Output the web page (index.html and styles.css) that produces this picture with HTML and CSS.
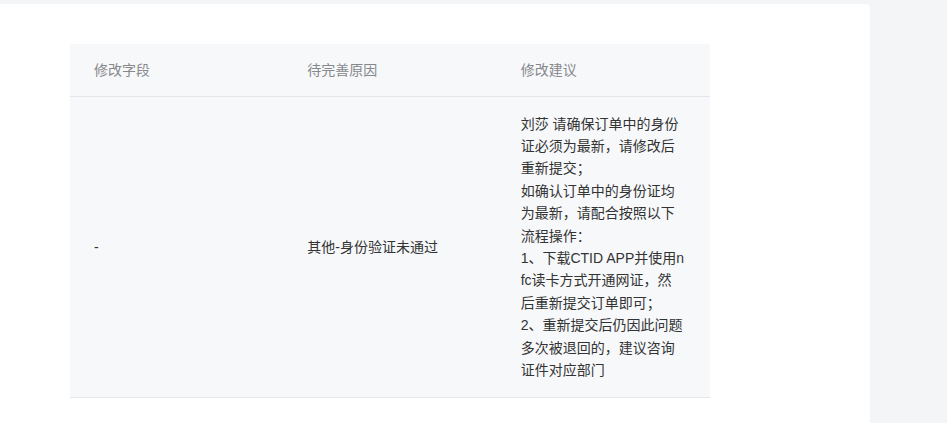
FILE: index.html
```html
<!DOCTYPE html>
<html lang="zh-CN">
<head>
<meta charset="utf-8">
<title>待完善信息</title>
<link rel="stylesheet" href="styles.css">
</head>
<body>
<div class="page">
  <div class="card">
    <table class="table">
      <colgroup>
        <col class="col">
        <col class="col">
        <col class="col">
      </colgroup>
      <thead>
        <tr>
          <th>修改字段</th>
          <th>待完善原因</th>
          <th>修改建议</th>
        </tr>
      </thead>
      <tbody>
        <tr>
          <td>-</td>
          <td>其他-身份验证未通过</td>
          <td class="advice">刘莎 请确保订单中的身份证必须为最新，请修改后重新提交；<br>如确认订单中的身份证均为最新，请配合按照以下流程操作：<br>1、下载CTID APP并使用nfc读卡方式开通网证，然后重新提交订单即可；<br>2、重新提交后仍因此问题多次被退回的，建议咨询证件对应部门</td>
        </tr>
      </tbody>
    </table>
  </div>
</div>
</body>
</html>
```

FILE: styles.css
```css
html, body {
  margin: 0;
  padding: 0;
  background: #f4f5f7;
  font-family: "Liberation Sans", "Noto Sans CJK SC", sans-serif;
}
.page {
  padding-top: 4px;
  height: 419px;
  overflow: hidden;
}
.card {
  width: 870px;
  height: 460px;
  background: #ffffff;
  border-top-right-radius: 4px;
  box-sizing: border-box;
  padding: 40px 0 0 70px;
}
.table {
  width: 640px;
  border-collapse: collapse;
  table-layout: fixed;
  font-size: 14px;
}
.col {
  width: 33.333%;
}
.table th {
  background: #f7f8fa;
  color: #86888c;
  font-weight: normal;
  text-align: left;
  height: 52px;
  padding: 0 24px;
  line-height: 20px;
  box-sizing: border-box;
  border-bottom: 1px solid #e5e6eb;
}
.table td {
  background: #f7f8fa;
  color: #333333;
  vertical-align: middle;
  padding: 16px 24px;
  line-height: 22.4px;
  word-break: break-all;
  border-bottom: 1px solid #e5e6eb;
}
.table td.advice {
  padding-right: 24.6px;
}
```
